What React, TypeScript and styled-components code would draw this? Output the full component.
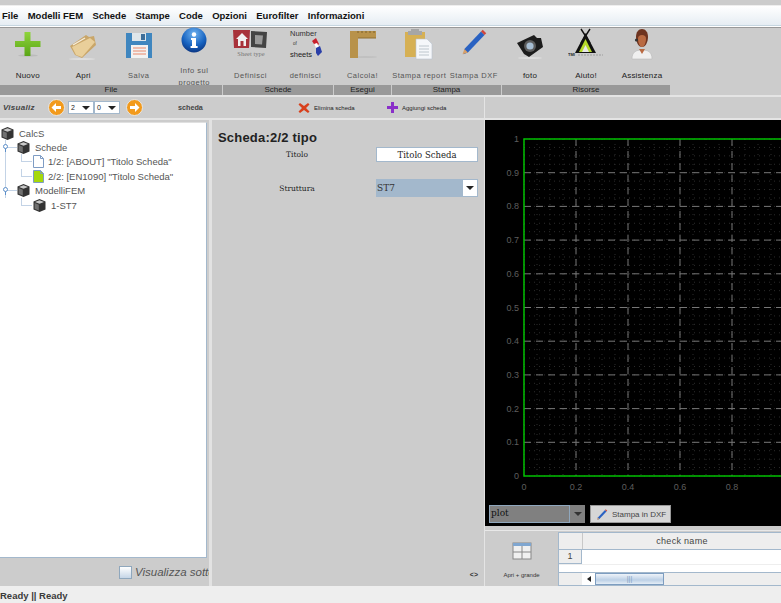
import React from 'react'
import styled, { createGlobalStyle } from 'styled-components'

const GlobalStyle = createGlobalStyle`
  html, body { margin: 0; padding: 0; background: #eeeeee; }
  body { font-family: 'Liberation Sans', Arial, sans-serif; }
`

const Page = styled.div`
  width: 781px;
  height: 603px;
  display: flex;
  flex-direction: column;
  overflow: hidden;
  background: #cccccc;
`

const MenuBar = styled.div`
  height: 19px;
  margin-top: 5px;
  display: flex;
  align-items: center;
  gap: 9.3px;
  padding-left: 2px;
  background: linear-gradient(#ffffff, #e6edf3);
  border-top: 1px solid #eeeeee;
  border-bottom: 1px solid #c6d6e0;
`

const MenuItem = styled.span`
  font-size: 9.5px;
  font-weight: 700;
  color: #111111;
`

const Toolbar = styled.div`
  height: 71px;
  display: flex;
  border-top: 1px solid #ffffff;
  border-bottom: 2px solid #e4e4e4;
  box-shadow: inset 0 1px 0 #999999;
  box-sizing: border-box;
`

const ToolGroup = styled.div<{ $width: number }>`
  width: ${(p) => p.$width}px;
  margin-right: 1px;
  display: flex;
  flex-direction: column;
`

const ToolRow = styled.div`
  height: 58px;
  display: flex;
  justify-content: space-around;
`

const Tool = styled.div`
  width: 55px;
  height: 58px;
  overflow: hidden;
  display: flex;
  flex-direction: column;
  align-items: center;
`

const IconSlot = styled.div<{ $short?: boolean }>`
  height: ${(p) => (p.$short ? 38 : 42)}px;
  flex-shrink: 0;
`

const ToolLabel = styled.div<{ $dark?: boolean; $wrap?: boolean }>`
  font-size: ${(p) => (p.$dark ? 8 : 7.5)}px;
  line-height: ${(p) => (p.$wrap ? 12 : 14)}px;
  letter-spacing: ${(p) => (p.$dark ? 0.2 : 0.5)}px;
  color: ${(p) => (p.$dark ? '#222222' : '#555555')};
  text-align: center;
  white-space: ${(p) => (p.$wrap ? 'normal' : 'nowrap')};
`

const GroupBar = styled.div`
  height: 10px;
  background: #999999;
  font-size: 8px;
  line-height: 10px;
  text-align: center;
  color: #222222;
`

const SubBar = styled.div`
  height: 23px;
  display: flex;
  border-bottom: 2px solid #e4e4e4;
  box-sizing: border-box;
`

const SubLeft = styled.div`
  width: 485px;
  display: flex;
  align-items: center;
  padding-left: 3px;
  box-sizing: border-box;
  border-right: 1px solid #e4e4e4;
`

const SubCaption = styled.span`
  width: 45px;
  font-size: 8px;
  font-style: italic;
  font-weight: 700;
  letter-spacing: 0.3px;
  color: #444444;
`

const Spinner = styled.div<{ $first?: boolean }>`
  width: 26px;
  height: 13px;
  margin-left: ${(p) => (p.$first ? 3 : 0)}px;
  display: flex;
  align-items: center;
  background: #ffffff;
  border: 1px solid #a3b8cc;
  box-sizing: border-box;
  font-size: 7px;
  padding-left: 2px;
  color: #222222;
`

const SpinnerArrow = styled.span`
  margin-left: auto;
  margin-right: 3px;
  width: 0;
  height: 0;
  border-left: 4px solid transparent;
  border-right: 4px solid transparent;
  border-top: 4px solid #222222;
`

const NextSlot = styled.div`
  margin-left: 6px;
  display: flex;
`

const SheetCaption = styled.span`
  margin-left: 35px;
  width: 120px;
  font-size: 8px;
  font-weight: 700;
  color: #444444;
  transform: scaleX(0.9);
  transform-origin: left;
`

const SheetAction = styled.div<{ $width: number }>`
  width: ${(p) => p.$width}px;
  display: flex;
  align-items: center;
  gap: 4px;
  font-size: 6px;
  color: #222222;
`

const Main = styled.div`
  flex: 1;
  display: flex;
  min-height: 0;
`

const TreeColumn = styled.div`
  width: 209px;
  display: flex;
  flex-direction: column;
  border-right: 3px solid #e2e2e2;
`

const TreeBox = styled.div`
  height: 436px;
  margin-top: 2px;
  width: 207px;
  padding-top: 3px;
  box-sizing: border-box;
  background: #ffffff;
  border-right: 1px solid #a3b8cc;
  border-bottom: 1px solid #a3b8cc;
  border-top: 1px solid #e0e0e0;
`

const TreeRow = styled.div`
  height: 14.4px;
  display: flex;
  align-items: center;
  font-size: 9.5px;
  color: #555555;
  white-space: nowrap;
`

const TreeText = styled.span<{ $gap: number }>`
  margin-left: ${(p) => p.$gap}px;
`

const CheckRow = styled.div`
  flex: 1;
  display: flex;
  align-items: center;
  padding-left: 119px;
  gap: 3px;
  overflow: hidden;
  font-size: 11.5px;
  font-style: italic;
  color: #555555;
  white-space: nowrap;
`

const CheckBox = styled.span`
  width: 11px;
  height: 11px;
  flex-shrink: 0;
  border: 1px solid #8fa7bd;
  background: linear-gradient(#ffffff, #c5d5e6);
`

const FormPanel = styled.div`
  width: 273px;
  display: flex;
  flex-direction: column;
  padding: 10px 6px 0;
  box-sizing: border-box;
  border-right: 1px solid #e4e4e4;
`

const FormTitle = styled.div`
  font-size: 13px;
  font-weight: 700;
  line-height: 15px;
  letter-spacing: 0.2px;
  color: #222222;
`

const FormRow = styled.div<{ $top: number }>`
  display: flex;
  align-items: center;
  margin-top: ${(p) => p.$top}px;
`

const FormLabel = styled.div`
  width: 158px;
  text-align: center;
  font-family: 'DejaVu Serif', 'Liberation Serif', serif;
  font-size: 7.5px;
  color: #222222;
`

const FormInput = styled.div`
  width: 102px;
  height: 15px;
  box-sizing: border-box;
  background: #ffffff;
  border: 1px solid #a3b8cc;
  font-family: 'DejaVu Serif', 'Liberation Serif', serif;
  font-size: 8.5px;
  line-height: 14px;
  text-align: center;
  color: #222222;
`

const FormCombo = styled.div`
  width: 102px;
  height: 18px;
  box-sizing: border-box;
  display: flex;
  background: #a3b8cc;
  border: 1px solid #a3b8cc;
  font-family: 'DejaVu Serif', 'Liberation Serif', serif;
  font-size: 9px;
  line-height: 16px;
  color: #333333;
`

const ComboArrowBox = styled.div`
  margin-left: auto;
  width: 14px;
  display: flex;
  align-items: center;
  justify-content: center;
  background: #ffffff;
`

const ComboArrow = styled.span<{ $muted?: boolean }>`
  width: 0;
  height: 0;
  border-left: 4px solid transparent;
  border-right: 4px solid transparent;
  border-top: 4px solid ${(p) => (p.$muted ? '#333333' : '#222222')};
`

const ResizeMark = styled.div`
  margin-top: auto;
  margin-bottom: 8px;
  text-align: right;
  font-size: 7px;
  font-weight: 700;
  color: #333333;
`

const ChartColumn = styled.div`
  flex: 1;
  display: flex;
  flex-direction: column;
  min-width: 0;
`

const ChartPanel = styled.div`
  height: 406px;
  background: #000000;
  display: flex;
  flex-direction: column;
`

const ChartFooter = styled.div`
  display: flex;
  align-items: flex-start;
  gap: 5px;
  padding: 0 0 0 4px;
`

const PlotCombo = styled.div`
  width: 96px;
  height: 18px;
  display: flex;
  background: #808080;
  box-sizing: border-box;
`

const PlotField = styled.div`
  width: 81px;
  box-sizing: border-box;
  border: 1px solid #8fa7bd;
  font-family: 'DejaVu Serif', 'Liberation Serif', serif;
  font-size: 9px;
  line-height: 15px;
  padding-left: 1px;
  color: #111111;
`

const PlotArrowBox = styled.div`
  flex: 1;
  display: flex;
  align-items: center;
  justify-content: center;
`

const DxfButton = styled.div`
  width: 81px;
  height: 18px;
  display: flex;
  align-items: center;
  gap: 4px;
  padding-left: 5px;
  box-sizing: border-box;
  background: #d6d6d6;
  border: 1px solid #999999;
  font-size: 8px;
  color: #444444;
  white-space: nowrap;
`

const BottomRow = styled.div`
  flex: 1;
  margin-top: 4px;
  display: flex;
  border-top: 1px solid #e8e8e8;
`

const OpenBlock = styled.div`
  width: 73px;
  flex-shrink: 0;
  display: flex;
  flex-direction: column;
  align-items: center;
  padding-top: 11px;
  box-sizing: border-box;
  font-size: 6px;
  color: #333333;
  gap: 12px;
  white-space: nowrap;
`

const CheckTable = styled.div`
  flex: 1;
  min-width: 0;
  margin-top: 1px;
  display: flex;
  flex-direction: column;
  background: #ffffff;
  border-left: 1px solid #a3b8cc;
  border-top: 1px solid #a3b8cc;
  border-bottom: 1px solid #a3b8cc;
`

const TableHeader = styled.div`
  height: 16px;
  display: flex;
  background: #eeeeee;
  border-bottom: 1px solid #a3b8cc;
`

const HeaderCorner = styled.div`
  width: 23px;
  border-right: 1px solid #c8c8c8;
`

const HeaderCell = styled.div`
  flex: 1;
  text-align: center;
  font-size: 9px;
  line-height: 16px;
  letter-spacing: 0.3px;
  color: #444444;
`

const TableRow = styled.div`
  height: 14px;
  display: flex;
  border-bottom: 1px solid #eeeeee;
`

const RowHead = styled.div`
  width: 23px;
  box-sizing: border-box;
  text-align: center;
  background: #eeeeee;
  border-right: 1px solid #a3b8cc;
  border-bottom: 1px solid #a3b8cc;
  font-size: 9px;
  line-height: 13px;
  color: #444444;
`

const ScrollRow = styled.div`
  margin-top: auto;
  height: 12px;
  display: flex;
  background: #eeeeee;
  border-top: 1px solid #a3b8cc;
`

const ScrollCorner = styled.div`
  width: 23px;
  border-right: 1px solid #ffffff;
`

const ScrollButton = styled.div`
  width: 12px;
  display: flex;
  align-items: center;
  justify-content: center;
  background: #ffffff;
`

const ScrollLeftArrow = styled.span`
  width: 0;
  height: 0;
  border-top: 3px solid transparent;
  border-bottom: 3px solid transparent;
  border-right: 4px solid #222222;
`

const ScrollThumb = styled.div`
  width: 69px;
  display: flex;
  align-items: center;
  justify-content: center;
  background: linear-gradient(#eef3f9, #bcd0e6 60%, #e4edf6);
  border: 1px solid #7d9dc0;
  box-sizing: border-box;
  color: #7d9dc0;
  font-size: 7px;
  line-height: 8px;
`

const StatusBar = styled.div`
  height: 17px;
  background: #eeeeee;
  font-size: 9.5px;
  font-weight: 700;
  line-height: 19px;
  color: #3a3a3a;
`

const PlusIcon = () => (
  <svg width="32" height="32" viewBox="0 0 32 32">
    <defs>
      <linearGradient id="plusFill" x1="0" y1="0" x2="0" y2="1">
        <stop offset="0" stopColor="#8fd43c" />
        <stop offset="1" stopColor="#5aa516" />
      </linearGradient>
    </defs>
    <ellipse cx="16" cy="28.500" rx="10" ry="1.200" fill="#bbbbbb" />
    <path d="M12.500 5h6v9h10v6h-10v9h-6v-9H3v-6h9.500z" fill="url(#plusFill)" />
  </svg>
)

const FolderIcon = () => (
  <svg width="32" height="36" viewBox="0 0 32 36">
    <ellipse cx="15" cy="32" rx="13" ry="1" fill="#dedede" />
    <path d="M3 19 19 8l3 2 5-1 2 9-14 13-7-3z" fill="#c9a669" />
    <path d="M5 20 23 11l5 4-13 15-6-2z" fill="#e9cf9a" />
    <path d="M6 18 18 11" stroke="#f6eddb" strokeWidth="1.400" />
  </svg>
)

const FloppyIcon = () => (
  <svg width="28" height="32" viewBox="0 0 28 32">
    <path d="M1 6h26v25H1z" fill="#3f86bf" />
    <path d="M7 6h14v8H7z" fill="#dfe6ea" />
    <path d="M16 7h4v6h-4z" fill="#3f6f99" />
    <path d="M6 18h17v13H6z" fill="#f2f2f2" />
    <path d="M8 21h13M8 24h13M8 27h13" stroke="#e9876a" strokeWidth="1.200" />
  </svg>
)

const InfoIcon = () => (
  <svg width="26" height="26" viewBox="0 0 26 26">
    <defs>
      <radialGradient id="infoFill" cx="0.5" cy="0.25" r="0.8">
        <stop offset="0" stopColor="#6fb2ef" />
        <stop offset="0.6" stopColor="#1662c0" />
        <stop offset="1" stopColor="#0a2f78" />
      </radialGradient>
    </defs>
    <circle cx="13" cy="13" r="12.500" fill="url(#infoFill)" />
    <circle cx="13" cy="7.500" r="2.200" fill="#ffffff" />
    <path d="M10 11h5v8h1.600v2H9.600v-2H11v-6h-1z" fill="#ffffff" />
  </svg>
)

const SheetTypeIcon = () => (
  <svg width="38" height="32" viewBox="0 0 38 32">
    <path d="M1 3h17l-1 18H2z" fill="#a8323a" />
    <path d="M4 12l6-6 6 6h-2v7h-8v-7z" fill="#f1f1f1" />
    <path d="M8.500 14h3v5h-3z" fill="#a8323a" />
    <path d="M19 4l16 1-1 16-15-1z" fill="#444444" />
    <path d="M23 8l8 .5-1 9-7-.5z" fill="#9a9a9a" />
    <text x="19" y="29" textAnchor="middle" fontFamily="'Liberation Serif', serif" fontSize="6.500" fill="#777777">Sheet type</text>
  </svg>
)

const SheetsIcon = () => (
  <svg width="38" height="36" viewBox="0 0 38 36">
    <text x="3" y="9" fontFamily="'Liberation Sans', sans-serif" fontSize="7.500" fill="#333333">Number</text>
    <text x="6" y="18" fontFamily="'Liberation Sans', sans-serif" fontSize="4.500" fill="#333333">of</text>
    <text x="3" y="30" fontFamily="'Liberation Sans', sans-serif" fontSize="7.500" fill="#222222">sheets</text>
    <path d="M25 14l4-3 3 6-3 3z" fill="#c8202c" />
    <path d="M27 17l3-1 2 4-3 1z" fill="#ffffff" />
    <path d="M29 21l4-2 2 6-4 4-2-3z" fill="#2a3fa8" />
  </svg>
)

const RulerIcon = () => (
  <svg width="32" height="32" viewBox="0 0 32 32">
    <ellipse cx="18" cy="30" rx="12" ry="1" fill="#c0c0c0" />
    <path d="M3 4h26v7H11v20H3z" fill="#b8924a" />
    <path d="M11 4v2M15 4v2M19 4v2M23 4v2M27 4v2" stroke="#6e5524" strokeWidth="0.800" />
    <path d="M11 11h18" stroke="#8f6f30" />
  </svg>
)

const ClipboardIcon = () => (
  <svg width="32" height="34" viewBox="0 0 32 34">
    <path d="M2 5h20v25H2z" fill="#d6b054" />
    <path d="M8 2h8v2h3v4H5V4h3z" fill="#a6a6a6" />
    <path d="M13 12h11l5 5v15H13z" fill="#f5f7fa" stroke="#b8c4d0" strokeWidth="0.600" />
    <path d="M16 19h10M16 22h10M16 25h10M16 28h10" stroke="#b8c0c8" strokeWidth="0.900" />
  </svg>
)

const PencilIcon = ({ size = 28 }: { size?: number }) => (
  <svg width={size} height={size} viewBox="0 0 32 32">
    <path d="M5 25 24 5l4 4L9 29l-5 2z" fill="#2a62c2" />
    <path d="M24 5l2-2 4 4-2 2z" fill="#d0463c" />
    <path d="M5 25l4 4-6 2z" fill="#d9a066" />
  </svg>
)

const CameraIcon = () => (
  <svg width="28" height="34" viewBox="0 0 28 34">
    <ellipse cx="14" cy="31" rx="12" ry="1" fill="#dddddd" />
    <path d="M1 16 18 8l3 3 4 0 2 9-14 10-5-3z" fill="#1c1c1c" />
    <circle cx="14" cy="19" r="6" fill="#5c5c5c" />
    <circle cx="14" cy="19" r="3.600" fill="#a7bed3" />
  </svg>
)

const TentIcon = () => (
  <svg width="36" height="34" viewBox="0 0 36 34">
    <path d="M13 2l9 14M22 2l-9 14" stroke="#111111" strokeWidth="1.400" />
    <path d="M17.500 6 28 26H7z" fill="#111111" />
    <path d="M17.500 12l6.500 13H11z" fill="#b6d92a" />
    <path d="M17.500 18l3.500 7h-7z" fill="#e8e8e8" />
    <text x="0" y="29" fontFamily="'Liberation Sans', sans-serif" fontSize="4" fontWeight="700" fill="#222222">TMI</text>
    <path d="M10 28h25" stroke="#b4b4b4" strokeWidth="2" strokeDasharray="2 1" />
  </svg>
)

const AssistIcon = () => (
  <svg width="22" height="34" viewBox="0 0 22 34">
    <path d="M1 32c0-7 4-9 10-9s10 2 10 9z" fill="#efefef" stroke="#b9b9b9" strokeWidth="0.600" />
    <path d="M5 10c0-5 2.500-8 6-8s6 3 6 8-2.500 10-6 10-6-5-6-10z" fill="#6e3420" />
    <path d="M7 12c0-3 1.500-4 4-4s4 1 4 4-1.500 8-4 8-4-5-4-8z" fill="#b96a42" />
    <path d="M8 22l3 5 3-5z" fill="#b96a42" />
    <circle cx="5.500" cy="13" r="1.600" fill="#333333" />
  </svg>
)

const ArrowDisc = ({ right }: { right?: boolean }) => (
  <svg width="17" height="17" viewBox="0 0 17 17">
    <circle cx="8.500" cy="8.500" r="8" fill="#f29a1c" stroke="#e6e6e6" />
    <path d={right ? 'M4 7h5V4l4.500 4.500L9 13v-3H4z' : 'M13 7H8V4L3.500 8.500 8 13v-3h5z'} fill="#ffffff" />
  </svg>
)

const CubeIcon = () => (
  <svg width="13" height="13" viewBox="0 0 13 13">
    <path d="M6.500 0 12.500 2.500v8L6.500 13 .5 10.500v-8z" fill="#333333" />
    <path d="M6.500 1.200 11 3 6.500 4.800 2 3z" fill="#c9c9c9" />
    <path d="M1.600 4 5.800 5.800v5.600L1.600 9.800z" fill="#707070" />
  </svg>
)

const PageIcon = ({ fill }: { fill: string }) => (
  <svg width="11" height="13" viewBox="0 0 11 13">
    <path d="M.5.5h7l3 3v9H.5z" fill={fill} stroke="#7e9cc4" />
    <path d="M7.500.5v3h3" fill="none" stroke="#7e9cc4" />
  </svg>
)

// tree connector lines, drawn per row in the gutter before each icon
const Gutter = ({ width, vLines = [], branch, handle }: {
  width: number
  vLines?: number[]
  branch?: [number, number]
  handle?: number
}) => (
  <svg width={width} height="15" viewBox={`0 0 ${width} 15`} style={{ flexShrink: 0 }}>
    {vLines.map((x) => (
      <line key={x} x1={x + 0.5} x2={x + 0.5} y1="0" y2="15" stroke="#c3d3e6" />
    ))}
    {branch && (
      <>
        <line x1={branch[0] + 0.5} x2={branch[0] + 0.5} y1="0" y2="7.500" stroke="#c3d3e6" />
        <line x1={branch[0]} x2={branch[1]} y1="7.500" y2="7.500" stroke="#c3d3e6" />
      </>
    )}
    {handle !== undefined && (
      <>
        <line x1={handle + 0.5} x2={width} y1="7.500" y2="7.500" stroke="#c3d3e6" />
        <line x1={handle + 0.5} x2={handle + 0.5} y1="0" y2="15" stroke="#c3d3e6" />
        <line x1={handle + 0.5} x2={handle + 0.5} y1="8" y2="12" stroke="#5d8fc9" />
        <circle cx={handle + 0.5} cy="6.500" r="2" fill="#ffffff" stroke="#5d8fc9" />
      </>
    )}
  </svg>
)

const xTicks = [0, 0.2, 0.4, 0.6, 0.8]
const yTicks = [0, 0.1, 0.2, 0.3, 0.4, 0.5, 0.6, 0.7, 0.8, 0.9, 1]
const plotLeft = 39
const plotTop = 19
const plotBottom = 356
const stepX = 52
const stepY = (plotBottom - plotTop) / 10

const Chart = () => {
  const minorX = Array.from({ length: 21 }, (_, i) => plotLeft + (i * stepX) / 4)
  const minorY = Array.from({ length: 41 }, (_, i) => plotTop + (i * stepY) / 4)
  return (
    <svg width="296" height="385" viewBox="0 0 296 385" style={{ display: 'block' }}>
      {minorX.map((x) => (
        <line key={`mx${x}`} x1={x} x2={x} y1={plotTop} y2={plotBottom} stroke="#2c2c2c" strokeDasharray="1 4" />
      ))}
      {minorY.map((y) => (
        <line key={`my${y}`} x1={plotLeft} x2="296" y1={y} y2={y} stroke="#2c2c2c" strokeDasharray="1 4" />
      ))}
      {xTicks.slice(1).map((t, i) => (
        <line key={t} x1={plotLeft + (i + 1) * stepX} x2={plotLeft + (i + 1) * stepX} y1={plotTop} y2={plotBottom} stroke="#777777" strokeDasharray="7 5" />
      ))}
      {yTicks.slice(1, 10).map((t, i) => (
        <line key={t} x1={plotLeft} x2="296" y1={plotBottom - (i + 1) * stepY} y2={plotBottom - (i + 1) * stepY} stroke="#777777" strokeDasharray="7 5" />
      ))}
      <path d={`M296 ${plotTop}H${plotLeft}V${plotBottom}H296`} fill="none" stroke="#00c000" strokeWidth="1.500" />
      {yTicks.map((t, i) => (
        <text key={t} x="34" y={plotBottom - i * stepY + 3} textAnchor="end" fontFamily="'Liberation Sans', sans-serif" fontSize="9" fill="#5e5e5e">{t}</text>
      ))}
      {xTicks.map((t, i) => (
        <text key={t} x={plotLeft + i * stepX} y="370" textAnchor="middle" fontFamily="'Liberation Sans', sans-serif" fontSize="9" fill="#5e5e5e">{t}</text>
      ))}
    </svg>
  )
}

const menuItems = ['File', 'Modelli FEM', 'Schede', 'Stampe', 'Code', 'Opzioni', 'Eurofilter', 'Informazioni']

interface ToolDef {
  label: string
  icon: React.ReactNode
  dark?: boolean
  wrap?: boolean
}

const groups: { name: string; width: number; tools: ToolDef[] }[] = [
  {
    name: 'File',
    width: 222,
    tools: [
      { label: 'Nuovo', icon: <PlusIcon />, dark: true },
      { label: 'Apri', icon: <FolderIcon />, dark: true },
      { label: 'Salva', icon: <FloppyIcon /> },
      { label: 'Info sul progetto', icon: <InfoIcon />, wrap: true },
    ],
  },
  {
    name: 'Schede',
    width: 110,
    tools: [
      { label: 'Definisci', icon: <SheetTypeIcon /> },
      { label: 'definisci', icon: <SheetsIcon /> },
    ],
  },
  { name: 'Esegui', width: 57, tools: [{ label: 'Calcola!', icon: <RulerIcon /> }] },
  {
    name: 'Stampa',
    width: 109,
    tools: [
      { label: 'Stampa report', icon: <ClipboardIcon /> },
      { label: 'Stampa DXF', icon: <PencilIcon /> },
    ],
  },
  {
    name: 'Risorse',
    width: 168,
    tools: [
      { label: 'foto', icon: <CameraIcon />, dark: true },
      { label: 'Aiuto!', icon: <TentIcon />, dark: true },
      { label: 'Assistenza', icon: <AssistIcon />, dark: true },
    ],
  },
]

export default function App() {
  return (
    <Page>
      <GlobalStyle />
      <MenuBar>
        {menuItems.map((m) => (
          <MenuItem key={m}>{m}</MenuItem>
        ))}
      </MenuBar>

      <Toolbar>
        {groups.map((g) => (
          <ToolGroup key={g.name} $width={g.width}>
            <ToolRow>
              {g.tools.map((t) => (
                <Tool key={t.label}>
                  <IconSlot $short={t.wrap}>{t.icon}</IconSlot>
                  <ToolLabel $dark={t.dark} $wrap={t.wrap}>{t.label}</ToolLabel>
                </Tool>
              ))}
            </ToolRow>
            <GroupBar>{g.name}</GroupBar>
          </ToolGroup>
        ))}
      </Toolbar>

      <SubBar>
        <SubLeft>
          <SubCaption>Visualiz</SubCaption>
          <ArrowDisc />
          <Spinner $first>2<SpinnerArrow /></Spinner>
          <Spinner>0<SpinnerArrow /></Spinner>
          <NextSlot><ArrowDisc right /></NextSlot>
          <SheetCaption>scheda</SheetCaption>
          <SheetAction $width={89}>
            <svg width="12" height="12" viewBox="0 0 12 12">
              <path d="M2 1l4 3 4-3 1.500 1.500-3.500 3.500 3.500 3.500-1.500 1.500-4-3-4 3-1.500-1.500 3.500-3.500-3.500-3.500z" fill="#d8401c" />
            </svg>
            Elimina scheda
          </SheetAction>
          <SheetAction $width={60}>
            <svg width="11" height="11" viewBox="0 0 11 11">
              <path d="M4 0h3v4h4v3H7v4H4V7H0V4h4z" fill="#8a2fc9" />
            </svg>
            Aggiungi scheda
          </SheetAction>
        </SubLeft>
      </SubBar>

      <Main>
        <TreeColumn>
          <TreeBox>
            <TreeRow>
              <Gutter width={1} />
              <CubeIcon />
              <TreeText $gap={5}>CalcS</TreeText>
            </TreeRow>
            <TreeRow>
              <Gutter width={17} handle={5} />
              <CubeIcon />
              <TreeText $gap={5}>Schede</TreeText>
            </TreeRow>
            <TreeRow>
              <Gutter width={33} vLines={[5]} branch={[21, 32]} />
              <PageIcon fill="#ffffff" />
              <TreeText $gap={4}>1/2: [ABOUT] "Titolo Scheda"</TreeText>
            </TreeRow>
            <TreeRow>
              <Gutter width={33} vLines={[5]} branch={[21, 32]} />
              <PageIcon fill="#a6d80a" />
              <TreeText $gap={4}>2/2: [EN1090] "Titolo Scheda"</TreeText>
            </TreeRow>
            <TreeRow>
              <Gutter width={17} handle={5} />
              <CubeIcon />
              <TreeText $gap={5}>ModelliFEM</TreeText>
            </TreeRow>
            <TreeRow>
              <Gutter width={33} branch={[21, 32]} />
              <CubeIcon />
              <TreeText $gap={5}>1-ST7</TreeText>
            </TreeRow>
          </TreeBox>
          <CheckRow>
            <CheckBox />
            Visualizza sotto
          </CheckRow>
        </TreeColumn>

        <FormPanel>
          <FormTitle>Scheda:2/2 tipo</FormTitle>
          <FormRow $top={2}>
            <FormLabel>Titolo</FormLabel>
            <FormInput>Titolo Scheda</FormInput>
          </FormRow>
          <FormRow $top={17}>
            <FormLabel>Struttura</FormLabel>
            <FormCombo>
              ST7
              <ComboArrowBox><ComboArrow /></ComboArrowBox>
            </FormCombo>
          </FormRow>
          <ResizeMark>&lt;&gt;</ResizeMark>
        </FormPanel>

        <ChartColumn>
          <ChartPanel>
            <Chart />
            <ChartFooter>
              <PlotCombo>
                <PlotField>plot</PlotField>
                <PlotArrowBox><ComboArrow $muted /></PlotArrowBox>
              </PlotCombo>
              <DxfButton>
                <PencilIcon size={12} />
                Stampa in DXF
              </DxfButton>
            </ChartFooter>
          </ChartPanel>
          <BottomRow>
            <OpenBlock>
              <svg width="20" height="18" viewBox="0 0 20 18">
                <rect x="1" y="1" width="18" height="16" fill="#f0f0f0" stroke="#888888" />
                <rect x="1" y="1" width="18" height="3" fill="#7fa6d0" />
                <path d="M1 10h18M10 4v13" stroke="#888888" />
              </svg>
              Apri + grande
            </OpenBlock>
            <CheckTable>
              <TableHeader>
                <HeaderCorner />
                <HeaderCell>check name</HeaderCell>
              </TableHeader>
              <TableRow>
                <RowHead>1</RowHead>
              </TableRow>
              <ScrollRow>
                <ScrollCorner />
                <ScrollButton><ScrollLeftArrow /></ScrollButton>
                <ScrollThumb>|||</ScrollThumb>
              </ScrollRow>
            </CheckTable>
          </BottomRow>
        </ChartColumn>
      </Main>

      <StatusBar>Ready || Ready</StatusBar>
    </Page>
  )
}
